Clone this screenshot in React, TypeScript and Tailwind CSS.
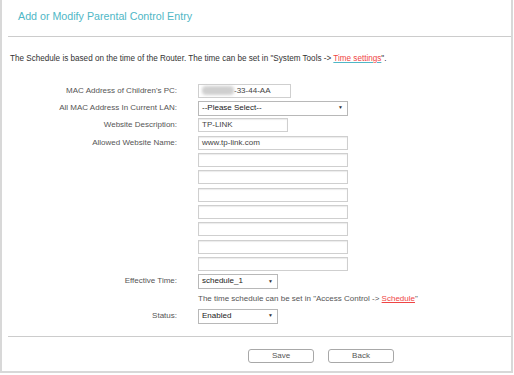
import React from 'react';

const font = { fontFamily: '"Liberation Sans", Arial, sans-serif' };

const Row: React.FC<{ label?: string; children?: React.ReactNode }> = ({ label, children }) => (
  <div className="flex h-[17.35px] items-center">
    <div className="w-[175px] shrink-0 text-right text-[8px] text-[#555]">{label}</div>
    <div className="ml-[21px] flex items-center">{children}</div>
  </div>
);

const TextBox: React.FC<{ w: string; value?: string }> = ({ w, value }) => (
  <div
    className={`${w} flex h-[14px] items-center border border-[#cfcfcf] bg-white px-[3px] text-[8px] text-[#444] shadow-[inset_0_1px_1px_rgba(0,0,0,0.08)]`}
  >
    {value}
  </div>
);

const SelectBox: React.FC<{ w: string; value: string }> = ({ w, value }) => (
  <div
    className={`${w} flex h-[15px] items-center justify-between border border-[#b8b8b8] bg-white pl-[3px] pr-[4px] text-[8px] text-[#222]`}
  >
    <span>{value}</span>
    <span className="text-[5px] text-[#333]">▼</span>
  </div>
);

export default function App() {
  return (
    <div className="h-[375px] w-[514px] bg-white" style={font}>
      <div className="h-[373px] w-[513px] border-x-2 border-b-2 border-[#d8d8d8]">
        {/* Header */}
        <div className="ml-[6px] h-[37px] border-b border-[#cccccc] pl-[10px] pt-[9px]">
          <h1 className="text-[10.7px] leading-[14px] text-[#4fb7c6]">Add or Modify Parental Control Entry</h1>
        </div>

        <p className="mt-[17px] pl-[8px] text-[8.15px] leading-[10px] text-[#333]">
          The Schedule is based on the time of the Router. The time can be set in "System Tools -&gt;{' '}
          <span className="text-[#ef4444] underline decoration-[#4fb7c6]">Time settings</span>".
        </p>

        {/* Form */}
        <div className="mt-[18px]">
          <Row label="MAC Address of Children's PC:">
            <div className="flex h-[14px] w-[93px] items-center border border-[#cfcfcf] bg-white px-[3px] text-[8px] text-[#444]">
              <div className="h-[9px] w-[32px] rounded-sm bg-[#cfcfcf] blur-[1.5px]" />
              <span>-33-44-AA</span>
            </div>
          </Row>
          <Row label="All MAC Address In Current LAN:">
            <SelectBox w="w-[150px]" value="--Please Select--" />
          </Row>
          <Row label="Website Description:">
            <TextBox w="w-[90px]" value="TP-LINK" />
          </Row>
          <Row label="Allowed Website Name:">
            <TextBox w="w-[150px]" value="www.tp-link.com" />
          </Row>
          {[0, 1, 2, 3, 4, 5, 6].map((i) => (
            <Row key={i}>
              <TextBox w="w-[150px]" />
            </Row>
          ))}
          <Row label="Effective Time:">
            <SelectBox w="w-[80px]" value="schedule_1" />
          </Row>
          <Row>
            <span className="text-[8px] text-[#555]">
              The time schedule can be set in "Access Control -&gt;{' '}
              <span className="text-[#ef4444] underline">Schedule</span>"
            </span>
          </Row>
          <Row label="Status:">
            <SelectBox w="w-[80px]" value="Enabled" />
          </Row>
        </div>

        {/* Footer */}
        <div className="ml-[6px] mt-[11px] border-t border-[#cccccc] pt-[12px]">
          <div className="flex gap-[14px] pl-[240px]">
            <button className="h-[14px] w-[66px] rounded-[3px] border border-[#a8a8a8] bg-white text-[8px] leading-[12px] text-[#555]">
              Save
            </button>
            <button className="h-[14px] w-[66px] rounded-[3px] border border-[#a8a8a8] bg-white text-[8px] leading-[12px] text-[#555]">
              Back
            </button>
          </div>
        </div>
      </div>
    </div>
  );
}
